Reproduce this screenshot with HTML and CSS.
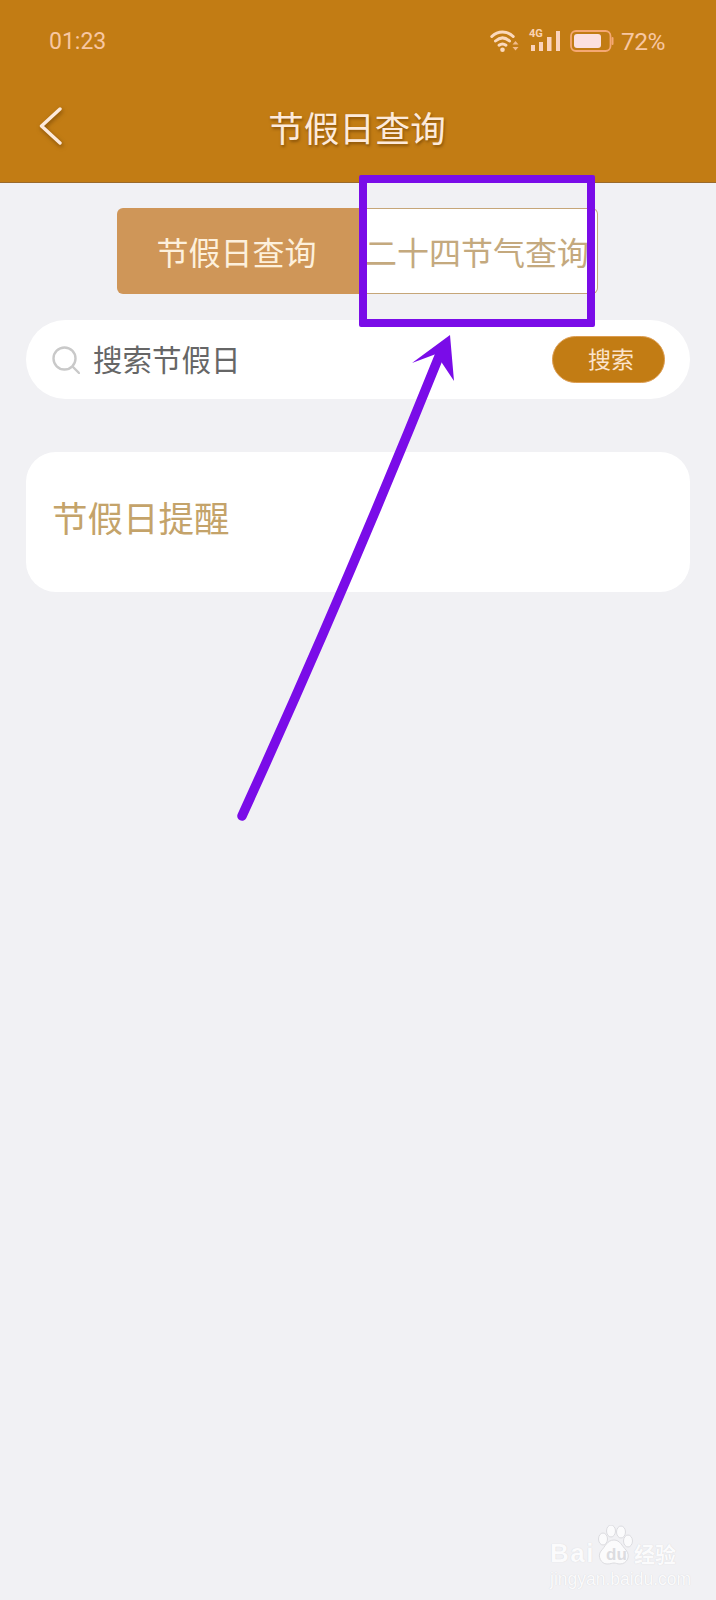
FILE: index.html
```html
<!DOCTYPE html>
<html lang="zh-CN">
<head>
<meta charset="utf-8">
<title>节假日查询</title>
<link rel="stylesheet" href="styles.css">
</head>
<body>
<div class="page">
  <header class="header">
    <div class="status">
      <span class="time">01:23</span>
      <div class="status-right">
        <svg class="wifi" viewBox="0 0 29 24" width="29" height="24" fill="none" stroke="#fbd9bc" stroke-width="3" stroke-linecap="round">
          <path d="M1.800 7.500C8 1.500 17 1.500 23.200 7.500"/>
          <path d="M5.500 12C10 8 15 8 19.500 12"/>
          <path d="M9 16.200C11.500 14.400 13.500 14.400 16 16.200"/>
          <circle cx="12.500" cy="20.800" r="2.300" fill="#fbd9bc" stroke="none"/>
          <path d="M22.500 15.500h6l-3-3.500zM22.500 18h6l-3 3.500z" fill="#f3bb8c" stroke="none"/>
        </svg>
        <div class="signal">
          <span class="net">4G</span>
          <svg viewBox="0 0 30 20" width="30" height="20" fill="#fbd3bc">
            <rect x="1" y="14" width="4" height="6"/>
            <rect x="9" y="11" width="4" height="9"/>
            <rect x="17" y="6" width="4.500" height="14"/>
            <rect x="26" y="0" width="4" height="20"/>
          </svg>
        </div>
        <svg class="battery" viewBox="0 0 44 22" width="44" height="22">
          <rect x="1" y="1" width="39.500" height="20" rx="5" fill="none" stroke="#f5a873" stroke-width="1.800"/>
          <rect x="4" y="4" width="27" height="14" rx="3" fill="#fbe0e0"/>
          <rect x="41.500" y="7" width="2" height="8" rx="1" fill="#f5a873"/>
        </svg>
        <span class="percent">72%</span>
      </div>
    </div>
    <div class="nav">
      <svg class="back" viewBox="0 0 24 38" width="24" height="38" fill="none" stroke="#fdeadb" stroke-width="3.400" stroke-linecap="round" stroke-linejoin="round">
        <path d="M21 2L2.500 19L21 36"/>
      </svg>
      <h1 class="title">节假日查询</h1>
    </div>
  </header>

  <div class="tabs">
    <div class="tab tab-on">节假日查询</div>
    <div class="tab tab-off">二十四节气查询</div>
  </div>

  <div class="search">
    <svg class="search-icon" viewBox="0 0 28 28" width="28" height="28" fill="none" stroke="#c9c9c9" stroke-width="2.400" stroke-linecap="round">
      <circle cx="12.500" cy="12.500" r="11"/>
      <path d="M21 21l6 6"/>
    </svg>
    <span class="search-text">搜索节假日</span>
    <span class="search-btn">搜索</span>
  </div>

  <section class="card">节假日提醒</section>

  <div class="mark-box"></div>
  <svg class="arrow" viewBox="0 0 716 1600" width="716" height="1600">
    <path class="arrow-line" d="M242 816Q345 590 440 354"/>
    <path class="arrow-head" d="M450 335L412 363L436 354L454 381Z"/>
  </svg>

  <div class="watermark">
    <div class="wm-top">
      <span class="wm-bai">Bai</span>
      <svg class="wm-paw" viewBox="0 0 38 42" width="38" height="42" fill="#fbfbfc" stroke="#dcdce0" stroke-width="1">
        <ellipse cx="8" cy="14" rx="4.500" ry="6"/>
        <ellipse cx="16" cy="6" rx="4.500" ry="6"/>
        <ellipse cx="26" cy="7" rx="4.500" ry="6"/>
        <ellipse cx="33" cy="16" rx="4.500" ry="6"/>
        <path d="M19 15c6 0 8 6 12 10c5 6 1 14-6 14c-3 0-4-1-6-1s-3 1-7 1c-6 0-10-8-6-13c4-4 6-11 13-11z"/>
      </svg>
      <span class="wm-du">du</span>
      <span class="wm-cn">经验</span>
    </div>
    <div class="wm-url">jingyan.baidu.com</div>
  </div>
</div>
</body>
</html>
```
FILE: styles.css
```css
* {
  box-sizing: border-box;
}

html,
body {
  margin: 0;
  padding: 0;
}

body {
  background: #f1f1f4;
  font-family: "Noto Sans CJK SC", "Noto Sans", sans-serif;
}

.page {
  position: relative;
  width: 716px;
  height: 1600px;
  overflow: hidden;
  background: #f1f1f4;
}

.header {
  height: 183px;
  background: #c27c14;
  border-bottom: 1px solid #9a6a2c;
}

.status {
  height: 82px;
  display: flex;
  align-items: center;
  justify-content: space-between;
  padding: 0 51px 0 49px;
  font-family: Roboto, "Noto Sans", sans-serif;
  color: #f8c7a2;
}

.time {
  font-size: 23px;
}

.status-right {
  display: flex;
  align-items: center;
}

.wifi {
  margin-right: 11px;
}

.signal {
  position: relative;
  width: 30px;
  height: 20px;
  margin-right: 10px;
}

.net {
  position: absolute;
  left: -1px;
  top: -3px;
  font-size: 11px;
  font-weight: 700;
  line-height: 12px;
  color: #fbd3b4;
}

.battery {
  margin-right: 7px;
}

.percent {
  font-size: 24.500px;
  letter-spacing: -0.5px;
}

.nav {
  position: relative;
  height: 90px;
  display: flex;
  align-items: center;
  justify-content: center;
  padding-right: 2px;
}

.back {
  position: absolute;
  left: 39px;
  top: 25px;
  filter: drop-shadow(1px 2px 2px rgba(90, 50, 0, 0.6));
}

.title {
  margin: 0;
  font-size: 35.500px;
  font-weight: 400;
  line-height: 50px;
  color: #fdeadb;
  text-shadow: 1px 2px 3px rgba(90, 50, 0, 0.55);
}

.tabs {
  display: flex;
  justify-content: flex-start;
  margin: 25px 0 0 117px;
  height: 86px;
}

.tab {
  display: flex;
  align-items: center;
  font-size: 32px;
  line-height: 40px;
}

.tab-on {
  width: 243px;
  padding-right: 4px;
  justify-content: center;
  background: #cf9658;
  border-radius: 6px 0 0 6px;
  color: #fdf0dc;
}

.tab-off {
  width: 238px;
  padding-left: 5px;
  background: #fff;
  border: 1.500px solid #c6a678;
  border-left: 0;
  border-radius: 0 6px 6px 0;
  color: #c4a97e;
  white-space: nowrap;
}

.search {
  display: flex;
  align-items: center;
  height: 79px;
  margin: 26px 26px 0;
  padding: 0 25px 0 26px;
  background: #fff;
  border-radius: 40px;
}

.search-icon {
  flex: none;
}

.search-text {
  flex: 1;
  margin-left: 13px;
  padding-bottom: 3px;
  font-size: 29.500px;
  line-height: 40px;
  color: #666;
}

.search-btn {
  display: flex;
  align-items: center;
  justify-content: center;
  width: 113px;
  height: 47px;
  padding: 0 0 3px 5px;
  background: #c27c14;
  border: 1px solid #dc9c50;
  border-radius: 24px;
  font-size: 23px;
  color: #fbe3cc;
}

.card {
  display: flex;
  align-items: center;
  height: 140px;
  margin: 53px 26px 0;
  padding: 0 0 12px 26px;
  background: #fff;
  border-radius: 30px;
  font-size: 35.500px;
  color: #c4a36a;
}

.mark-box {
  position: absolute;
  left: 359px;
  top: 175px;
  width: 236px;
  height: 152px;
  border: 8px solid #7a0ce8;
  border-radius: 2px;
}

.arrow {
  position: absolute;
  left: 0;
  top: 0;
  pointer-events: none;
}

.arrow-line {
  fill: none;
  stroke: #7a0ce8;
  stroke-width: 9.500;
  stroke-linecap: round;
}

.arrow-head {
  fill: #7a0ce8;
}

.watermark {
  position: absolute;
  left: 550px;
  top: 1523px;
  width: 132px;
  color: #fbfbfc;
  text-shadow: 0 0 1px #d0d0d4;
}

.wm-top {
  position: relative;
  display: flex;
  align-items: flex-end;
  height: 44px;
}

.wm-bai {
  font-family: "Liberation Sans", sans-serif;
  font-size: 26px;
  font-weight: 700;
  line-height: 28px;
  letter-spacing: 1.500px;
}

.wm-paw {
  flex: none;
}

.wm-du {
  position: absolute;
  left: 56px;
  top: 23px;
  font-family: "Liberation Sans", sans-serif;
  font-size: 17px;
  font-weight: 700;
  line-height: 18px;
  color: #dcdce0;
  text-shadow: none;
}

.wm-cn {
  margin-left: 1px;
  font-size: 21px;
  font-weight: 700;
  line-height: 28px;
}

.wm-url {
  margin-top: 3px;
  font-family: "Liberation Sans", sans-serif;
  font-size: 17.500px;
  line-height: 18px;
  white-space: nowrap;
}
```
